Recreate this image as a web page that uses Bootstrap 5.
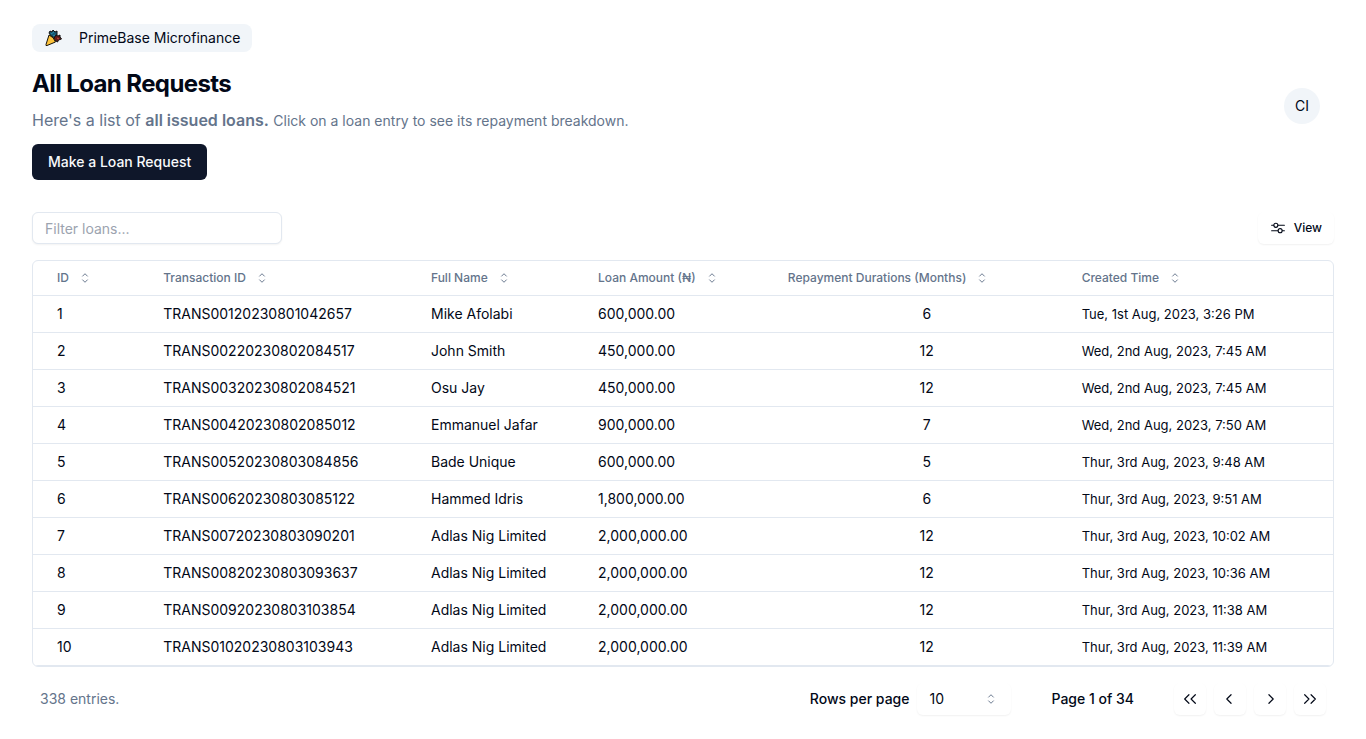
<!DOCTYPE html>
<html lang="en">
<head>
<meta charset="utf-8">
<meta name="viewport" content="width=device-width, initial-scale=1">
<title>All Loan Requests</title>
<link href="https://cdn.jsdelivr.net/npm/bootstrap@5.3.0/dist/css/bootstrap.min.css" rel="stylesheet">
<style>
  :root { --ink: #020817; --navy: #0f172a; --slate: #64748b; --line: #e2e8f0; --soft: #f1f5f9; }
  body { font-family: Inter, sans-serif; font-size: 14px; line-height: 20px; color: var(--ink); }
  .page { padding: 24px 32px; }
  .org-tag { width: fit-content; background: var(--soft); border-radius: 8px; padding: 4px 12px; gap: 16px; }
  .page-title { font-size: 24px; line-height: 32px; font-weight: 700; letter-spacing: -0.025em; margin: 16px 0 8px; }
  .intro { color: var(--slate); font-size: 16px; line-height: 24px; margin-bottom: 11px; }
  .intro span { font-size: 14px; }
  .intro strong { font-weight: 600; }
  .btn { --bs-btn-font-size: 14px; --bs-btn-line-height: 20px; --bs-btn-font-weight: 500; --bs-btn-border-radius: 6px; --bs-btn-color: var(--ink); }
  .btn-navy { --bs-btn-color: #f8fafc; --bs-btn-bg: var(--navy); --bs-btn-hover-bg: #273044; --bs-btn-hover-color: #fff; --bs-btn-padding-x: 15px; --bs-btn-padding-y: 7px; }
  .avatar { width: 36px; height: 36px; margin: 8px 14px 0 0; background: var(--soft); --bs-btn-font-weight: 400; }
  .raised { background: #fff; border-radius: 6px; box-shadow: 0 1px 2px rgba(0,0,0,.06); }
  .filter { width: 250px; height: 32px; padding: 4px 12px; font-size: 14px; border-color: var(--line); border-radius: 6px; box-shadow: 0 1px 2px rgba(0,0,0,.05); }
  .filter::placeholder { color: #9ca3af; }
  .view-btn { height: 32px; font-size: 12px; gap: 8px; padding: 0 11px; }
  .table-frame { border: 1px solid var(--line); border-radius: 6px; }
  .loans { --bs-table-bg: transparent; --bs-table-color: var(--ink); table-layout: fixed; }
  .loans > :not(caption) > * > * { padding: 8px; border-color: var(--line); }
  .loans > :not(caption) > * > :first-child { padding-left: 24px; }
  .loans > thead > tr > th { padding-top: 0; padding-bottom: 0; height: 34px; line-height: 0; vertical-align: middle; }
  .loans .when { font-size: 13px; }
  .c-id { width: 9.4%; } .c-tx { width: 20.6%; } .c-name { width: 12.85%; } .c-sum { width: 14.6%; } .c-term { width: 22.6%; } .c-when { width: 19.95%; }
  .sort { border: 0; padding: 0; background: none; color: var(--slate); font-size: 12px; line-height: 20px; font-weight: 500; white-space: nowrap; gap: 8px; }
  .muted { color: var(--slate); }
  .rows-box { width: 94px; height: 32px; }
  .rows-box select { appearance: none; border: 0; background: none; color: var(--ink); width: 100%; height: 100%; padding: 0 12px; border-radius: 6px; }
  .rows-box svg { right: 12px; top: 8px; pointer-events: none; }
  .page-count { margin: 0 40px; }
  .pager-btn { width: 32px; height: 32px; padding: 0; }
  svg { flex: none; }
</style>
</head>
<body>
<svg class="d-none" aria-hidden="true">
  <symbol id="sort-icon" viewBox="0 0 15 15"><path d="M5.25 5.75 7.5 3.5l2.25 2.25M5.25 9.25 7.5 11.5l2.25-2.25" fill="none" stroke="currentColor" stroke-width=".9" stroke-linecap="round" stroke-linejoin="round"/></symbol>
</svg>
<main class="page">
  <header class="d-flex justify-content-between align-items-center">
    <div>
      <div class="org-tag d-flex align-items-center">
        <svg width="19" height="20" viewBox="0 0 19 20" aria-hidden="true">
          <path d="m5 5 1-2 2 1 1-2 2 2 2-1v4l-2 3-4-2z" fill="#18566f" stroke="#111" stroke-width="1"/>
          <path d="m10 10 2-3 2 1 2-1v2l1.500 2-3 1-1 2-3-2z" fill="#651b19" stroke="#111" stroke-width="1"/>
          <path d="M5 7q5 2 6.500 7L3 17.500q-1.500.5-1-1z" fill="#fdc33b" stroke="#17120a" stroke-width="1" stroke-linejoin="round"/>
          <path d="m7 6 3-2m-1 4 2-1" stroke="#2890ae" stroke-width="1"/>
          <path d="m13 10 2 1" stroke="#c44b3a"/>
        </svg>
        <span>PrimeBase Microfinance</span>
      </div>
      <h1 class="page-title">All Loan Requests</h1>
      <p class="intro">Here's a list of <strong>all issued loans.</strong> <span>Click on a loan entry to see its repayment breakdown.</span></p>
      <button type="button" class="btn btn-navy d-block">Make a Loan Request</button>
    </div>
    <button type="button" class="btn avatar rounded-circle p-0 border-0" aria-label="Account CI">CI</button>
  </header>

  <div class="d-flex justify-content-between align-items-center pt-3 mt-3 mb-3">
    <input type="text" class="form-control filter" placeholder="Filter loans..." aria-label="Filter loans">
    <button type="button" class="btn raised view-btn d-inline-flex align-items-center">
      <svg width="16" height="16" viewBox="0 0 15 15" fill="none" stroke="currentColor" stroke-width="1" stroke-linecap="round" aria-hidden="true"><path d="M1.500 5h2m4 0h6M1.500 10h6m4 0h2"/><circle cx="5.500" cy="5" r="1.900"/><circle cx="9.500" cy="10" r="1.900"/></svg>
      View
    </button>
  </div>

  <div class="table-frame table-responsive">
    <table class="table loans mb-0">
      <thead>
        <tr>
          <th class="c-id"><button type="button" class="sort d-inline-flex align-items-center">ID <svg width="16" height="16"><use href="#sort-icon"/></svg></button></th>
          <th class="c-tx"><button type="button" class="sort d-inline-flex align-items-center">Transaction ID <svg width="16" height="16"><use href="#sort-icon"/></svg></button></th>
          <th class="c-name"><button type="button" class="sort d-inline-flex align-items-center">Full Name <svg width="16" height="16"><use href="#sort-icon"/></svg></button></th>
          <th class="c-sum"><button type="button" class="sort d-inline-flex align-items-center">Loan Amount (₦) <svg width="16" height="16"><use href="#sort-icon"/></svg></button></th>
          <th class="c-term"><button type="button" class="sort d-inline-flex align-items-center">Repayment Durations (Months) <svg width="16" height="16"><use href="#sort-icon"/></svg></button></th>
          <th class="c-when"><button type="button" class="sort d-inline-flex align-items-center">Created Time <svg width="16" height="16"><use href="#sort-icon"/></svg></button></th>
        </tr>
      </thead>
      <tbody>
        <tr><td>1</td><td>TRANS00120230801042657</td><td>Mike Afolabi</td><td>600,000.00</td><td class="text-center">6</td><td class="when">Tue, 1st Aug, 2023, 3:26 PM</td></tr>
        <tr><td>2</td><td>TRANS00220230802084517</td><td>John Smith</td><td>450,000.00</td><td class="text-center">12</td><td class="when">Wed, 2nd Aug, 2023, 7:45 AM</td></tr>
        <tr><td>3</td><td>TRANS00320230802084521</td><td>Osu Jay</td><td>450,000.00</td><td class="text-center">12</td><td class="when">Wed, 2nd Aug, 2023, 7:45 AM</td></tr>
        <tr><td>4</td><td>TRANS00420230802085012</td><td>Emmanuel Jafar</td><td>900,000.00</td><td class="text-center">7</td><td class="when">Wed, 2nd Aug, 2023, 7:50 AM</td></tr>
        <tr><td>5</td><td>TRANS00520230803084856</td><td>Bade Unique</td><td>600,000.00</td><td class="text-center">5</td><td class="when">Thur, 3rd Aug, 2023, 9:48 AM</td></tr>
        <tr><td>6</td><td>TRANS00620230803085122</td><td>Hammed Idris</td><td>1,800,000.00</td><td class="text-center">6</td><td class="when">Thur, 3rd Aug, 2023, 9:51 AM</td></tr>
        <tr><td>7</td><td>TRANS00720230803090201</td><td>Adlas Nig Limited</td><td>2,000,000.00</td><td class="text-center">12</td><td class="when">Thur, 3rd Aug, 2023, 10:02 AM</td></tr>
        <tr><td>8</td><td>TRANS00820230803093637</td><td>Adlas Nig Limited</td><td>2,000,000.00</td><td class="text-center">12</td><td class="when">Thur, 3rd Aug, 2023, 10:36 AM</td></tr>
        <tr><td>9</td><td>TRANS00920230803103854</td><td>Adlas Nig Limited</td><td>2,000,000.00</td><td class="text-center">12</td><td class="when">Thur, 3rd Aug, 2023, 11:38 AM</td></tr>
        <tr><td>10</td><td>TRANS01020230803103943</td><td>Adlas Nig Limited</td><td>2,000,000.00</td><td class="text-center">12</td><td class="when">Thur, 3rd Aug, 2023, 11:39 AM</td></tr>
      </tbody>
    </table>
  </div>

  <footer class="d-flex justify-content-between align-items-center mt-3 px-2">
    <div class="muted">338 entries.</div>
    <div class="d-flex align-items-center fw-medium">
      <label for="rows" class="me-2">Rows per page</label>
      <div class="rows-box raised position-relative">
        <select id="rows"><option>10</option><option>20</option><option>30</option><option>40</option><option>50</option></select>
        <svg class="position-absolute muted" width="16" height="16" aria-hidden="true"><use href="#sort-icon"/></svg>
      </div>
      <div class="page-count">Page 1 of 34</div>
      <nav class="d-flex gap-2" aria-label="Pages">
        <button type="button" class="btn raised pager-btn d-flex align-items-center justify-content-center" aria-label="First page"><svg width="16" height="16" viewBox="0 0 15 15" fill="none" stroke="currentColor" stroke-width="1.100" stroke-linecap="round" stroke-linejoin="round"><path d="M6.500 3.500l-4 4 4 4M12.500 3.500l-4 4 4 4"/></svg></button>
        <button type="button" class="btn raised pager-btn d-flex align-items-center justify-content-center" aria-label="Previous page"><svg width="16" height="16" viewBox="0 0 15 15" fill="none" stroke="currentColor" stroke-width="1.100" stroke-linecap="round" stroke-linejoin="round"><path d="M8.500 3.500l-4 4 4 4"/></svg></button>
        <button type="button" class="btn raised pager-btn d-flex align-items-center justify-content-center" aria-label="Next page"><svg width="16" height="16" viewBox="0 0 15 15" fill="none" stroke="currentColor" stroke-width="1.100" stroke-linecap="round" stroke-linejoin="round"><path d="M6.500 3.500l4 4-4 4"/></svg></button>
        <button type="button" class="btn raised pager-btn d-flex align-items-center justify-content-center" aria-label="Last page"><svg width="16" height="16" viewBox="0 0 15 15" fill="none" stroke="currentColor" stroke-width="1.100" stroke-linecap="round" stroke-linejoin="round"><path d="M2.500 3.500l4 4-4 4M8.500 3.500l4 4-4 4"/></svg></button>
      </nav>
    </div>
  </footer>
</main>
<script src="https://cdn.jsdelivr.net/npm/bootstrap@5.3.0/dist/js/bootstrap.bundle.min.js"></script>
</body>
</html>
